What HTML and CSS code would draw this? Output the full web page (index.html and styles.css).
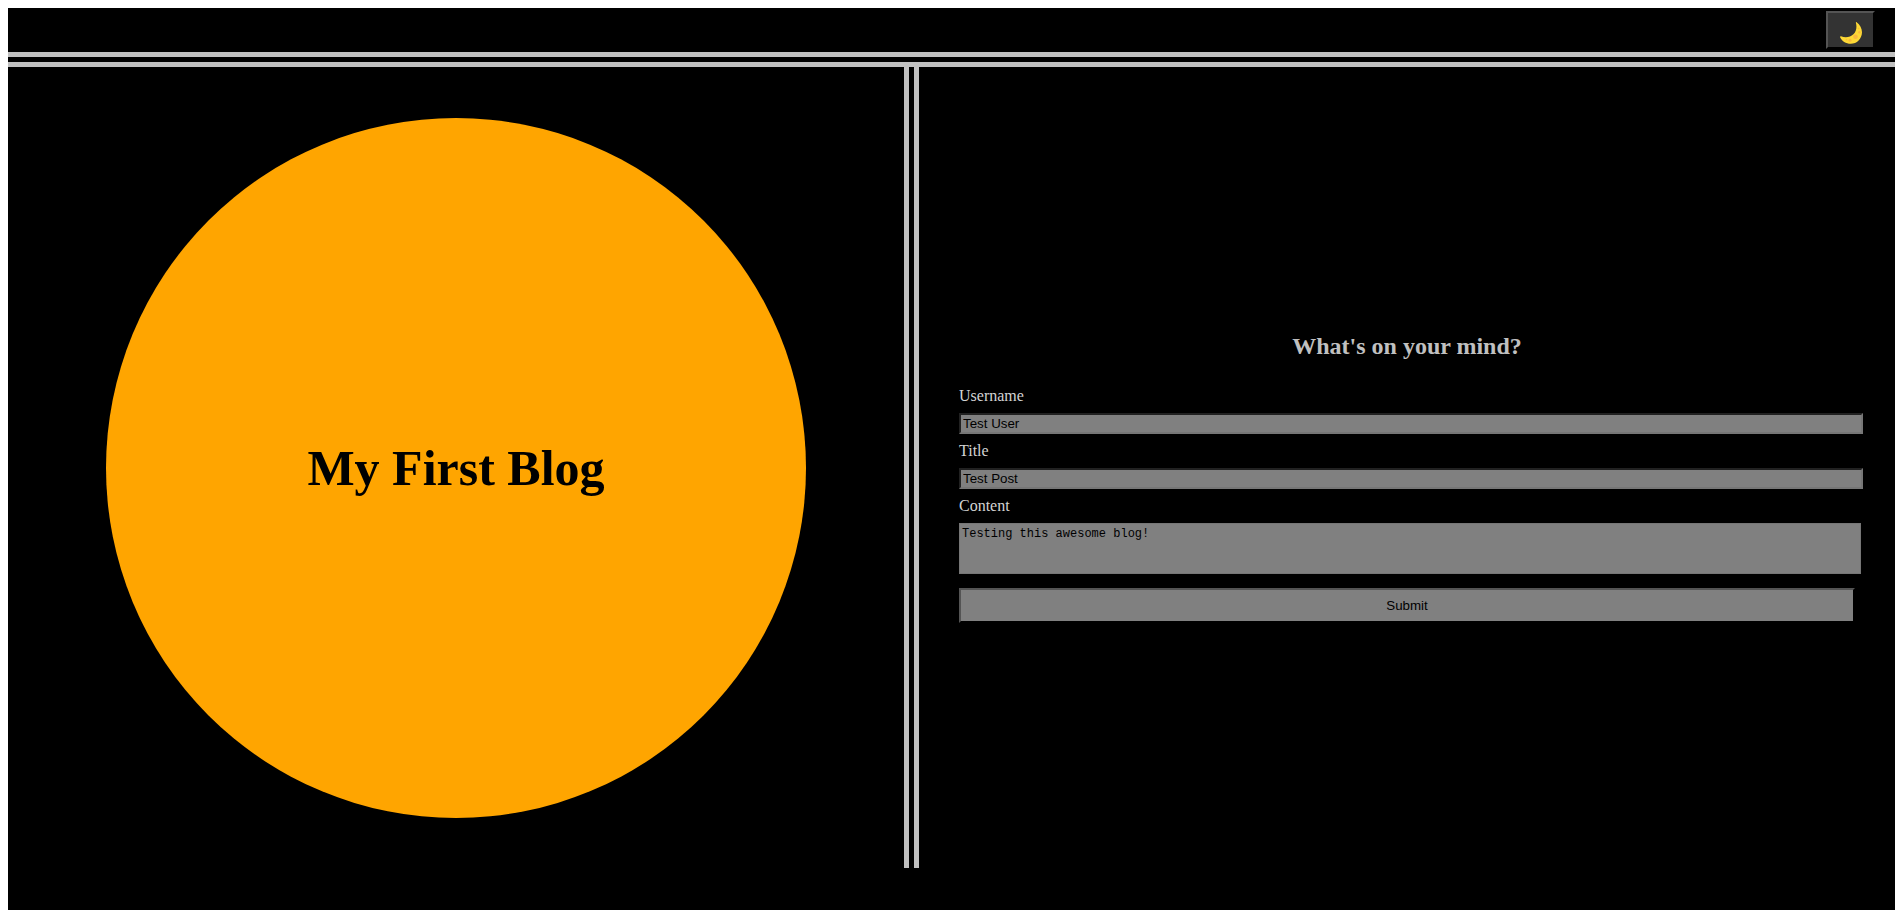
FILE: index.html
```html
<!DOCTYPE html>
<html lang="en">
<head>
  <meta charset="utf-8">
  <title>My First Blog</title>
  <link rel="stylesheet" href="styles.css">
</head>
<body class="dark">
  <header class="topbar">
    <button class="theme-toggle" type="button" aria-label="Toggle theme">
      <svg class="moon" viewBox="0 0 22 22" aria-hidden="true">
        <path d="M16.600.2C20 2.700 22 6.400 22 10.300 21.800 17 17 21.800 10.700 21.800 6 21.800 1.600 18.800.1 15.200-.1 14.500.4 14.100 1 14.300 5.400 15.900 10.200 15.400 13.400 12.200 16.500 9.200 17 4.900 15.900.8 15.700.2 16.200-.1 16.600.2Z" fill="#fdd835"/>
        <g fill="#f9b83f">
          <circle cx="15.500" cy="14.700" r="2.300"/>
          <circle cx="19.400" cy="10.300" r="1.200"/>
          <circle cx="10" cy="18.200" r="1.500"/>
          <circle cx="6.500" cy="17.700" r=".8"/>
          <circle cx="18.600" cy="6.500" r=".8"/>
        </g>
      </svg>
    </button>
  </header>
  <main class="layout">
    <section class="hero">
      <div class="sun"><h1 class="title">My First Blog</h1></div>
    </section>
    <section class="panel">
      <form class="post-form">
        <h2 class="form-title">What's on your mind?</h2>
        <label class="label" for="username">Username</label>
        <input class="field" id="username" type="text" value="Test User">
        <label class="label" for="title">Title</label>
        <input class="field" id="title" type="text" value="Test Post">
        <label class="label" for="content">Content</label>
        <textarea class="field area" id="content" rows="3">Testing this awesome blog!</textarea>
        <button class="submit" type="submit">Submit</button>
      </form>
    </section>
  </main>
</body>
</html>
```
FILE: styles.css
```css
html {
  background: #fff;
}

body {
  margin: 8px 4px 0 8px;
  font-family: "Times New Roman", "Liberation Serif", serif;
  font-size: 16px;
}

.dark {
  min-height: calc(100vh - 8px);
  background: #000;
  color: #c0c0c0;
}

.topbar {
  display: flex;
  justify-content: flex-end;
  padding: 3px 20px;
  border-bottom: 15px double #c0c0c0;
}

.theme-toggle {
  display: flex;
  padding: 9px 11px 3px 12px;
  border: 2px outset #000;
  background: #333;
}

.moon {
  width: 22px;
  height: 22px;
}

.layout {
  display: grid;
  grid-template-columns: 911fr 976fr;
}

.hero {
  display: flex;
  align-items: center;
  justify-content: center;
  padding: 51px 0 50px;
  border-right: 15px double #c0c0c0;
}

.sun {
  display: flex;
  align-items: center;
  justify-content: center;
  width: 700px;
  aspect-ratio: 1;
  border-radius: 50%;
  background: orange;
  color: #000;
}

.title {
  margin: 0;
  font-size: 50px;
}

.panel {
  display: flex;
  flex-direction: column;
  justify-content: center;
  padding: 0 40px;
}

.post-form {
  display: flex;
  flex-direction: column;
}

.form-title {
  margin: 20px 0;
  font-size: 24px;
  line-height: 26px;
  text-align: center;
}

.label {
  margin: 8px 0;
  color: #d3d3d3;
  line-height: 18px;
}

.field {
  box-sizing: content-box;
  width: 100%;
  padding: 1px 2px;
  border: 2px inset #767676;
  background: gray;
  color: #000;
  font-family: Arial, "Liberation Sans", sans-serif;
  line-height: 15px;
}

.area {
  height: 45px;
  padding: 2px;
  border: 1px solid #767676;
  font-family: Consolas, "Liberation Mono", monospace;
  font-size: 12px;
  line-height: 16px;
  resize: none;
  overflow: hidden;
}

.submit {
  margin-top: 14px;
  padding: 8px;
  border: 2px outset #000;
  background: gray;
  color: #000;
  font-family: Arial, "Liberation Sans", sans-serif;
  line-height: 15px;
}
```
